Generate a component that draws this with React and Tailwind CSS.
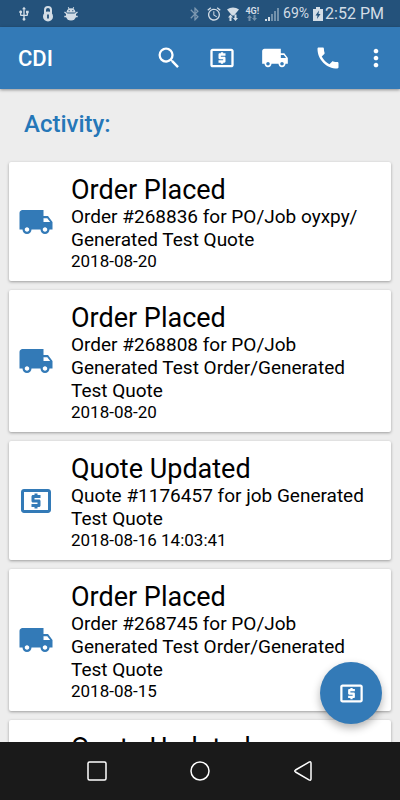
import {
  MdAlarm,
  MdBluetooth,
  MdLocalAtm,
  MdLocalShipping,
  MdMoreVert,
  MdPhone,
  MdSearch,
  MdUsb,
} from 'react-icons/md';

const activities = [
  {
    id: 1,
    type: 'order',
    title: 'Order Placed',
    description: 'Order #268836 for PO/Job oyxpy/\u200bGenerated Test Quote',
    date: '2018-08-20',
  },
  {
    id: 2,
    type: 'order',
    title: 'Order Placed',
    description: 'Order #268808 for PO/Job Generated Test Order/Generated Test Quote',
    date: '2018-08-20',
  },
  {
    id: 3,
    type: 'quote',
    title: 'Quote Updated',
    description: 'Quote #1176457 for job Generated Test Quote',
    date: '2018-08-16 14:03:41',
  },
  {
    id: 4,
    type: 'order',
    title: 'Order Placed',
    description: 'Order #268745 for PO/Job Generated Test Order/Generated Test Quote',
    date: '2018-08-15',
  },
  {
    id: 5,
    type: 'quote',
    title: 'Quote Updated',
  },
];

function LockIcon() {
  return (
    <svg width="12" height="16" viewBox="0 0 12 16" fill="none">
      <path d="M3 8V4a3 3 0 0 1 6 0v4" stroke="currentColor" strokeWidth="2" />
      <circle cx="6" cy="10.5" r="5" fill="currentColor" />
      <path d="M6 8.5v4" stroke="#24527b" strokeWidth="1.8" />
    </svg>
  );
}

function DebugIcon() {
  return (
    <svg width="14" height="16" viewBox="0 0 14 16" fill="currentColor">
      <path d="M2.5 6.5C2.5 4.8 3.3 3.6 4.5 2.9L3.8 1.5l.8-.4.9 1.5a5 5 0 0 1 3 0l.9-1.5.8.4-.7 1.4c1.2.7 2 1.9 2 3.6z" />
      <path d="M2 7.5h10V10a5 4.5 0 0 1-10 0z" />
      <path
        d="M.5 6L3 8M13.5 6L11 8M.3 10.5h13.4"
        fill="none"
        stroke="currentColor"
        strokeWidth="1.3"
      />
      <circle cx="5.2" cy="4.7" r=".6" fill="#24527b" />
      <circle cx="8.8" cy="4.7" r=".6" fill="#24527b" />
    </svg>
  );
}

function WifiIcon() {
  return (
    <svg width="12" height="16" viewBox="0 0 12 16" fill="currentColor">
      <path d="M0 3.5C3.5.8 8.5.8 12 3.5L7 9.5H5z" />
      <path d="M3.5 8.5L6 11.5H4.5V15h-2v-3.5H1zM8.5 15L6 12h1.5V8.5h2V12H11z" />
    </svg>
  );
}

function SignalIcon() {
  return (
    <svg width="15" height="14" viewBox="0 0 15 14" fill="currentColor">
      <path d="M0 12h2v2H0zM3 10h2v4H3z" />
      <path d="M6 7h2v7H6zM9 4h2v10H9zM12 1h2v13h-2z" opacity=".45" />
    </svg>
  );
}

function BatteryIcon() {
  return (
    <svg width="10" height="14" viewBox="0 0 10 14" fill="currentColor">
      <path d="M3 0h4v2h3v12H0V2h3z" />
      <path d="M6 3.5L2.5 8.5h2L4 12l3.5-5h-2z" fill="#24527b" />
    </svg>
  );
}

function StatusBar() {
  return (
    <div className="flex h-[27px] shrink-0 items-center justify-between bg-[#24527b] px-4 text-[#d3dde6]">
      <div className="flex items-center gap-[10px]">
        <MdUsb size={16} />
        <LockIcon />
        <DebugIcon />
      </div>
      <div className="flex items-center">
        <MdBluetooth size={16} className="mr-[3px] opacity-50" />
        <MdAlarm size={16} className="mr-[5px]" />
        <WifiIcon />
        <span className="mx-[6px] flex flex-col items-center text-[9px] leading-[8px] font-bold">
          4G!
          <svg width="10" height="6" viewBox="0 0 10 6" fill="currentColor" opacity=".45">
            <path d="M2.5 0L5 3H3.5v3h-2V3H0zM7.5 6L5 3h1.5V0h2v3H10z" />
          </svg>
        </span>
        <SignalIcon />
        <span className="ml-[3px] text-[14px]">69%</span>
        <span className="mr-[2px] ml-[4px]">
          <BatteryIcon />
        </span>
        <span className="text-[16px]">2:52 PM</span>
      </div>
    </div>
  );
}

function AppBar() {
  const actions = [
    { label: 'Search', Icon: MdSearch },
    { label: 'Quotes', Icon: MdLocalAtm },
    { label: 'Orders', Icon: MdLocalShipping },
    { label: 'Call', Icon: MdPhone },
  ];

  return (
    <header className="relative z-10 flex h-[62px] shrink-0 items-center bg-[#337ab7] pr-[3px] pl-[18px] text-white shadow-[0_1px_3px_rgba(0,0,0,0.4)]">
      <h1 className="flex-1 text-[22px] font-medium">CDI</h1>
      {actions.map(({ label, Icon }) => (
        <button key={label} aria-label={label} className="flex h-12 w-[53px] items-center justify-center">
          <Icon size={28} />
        </button>
      ))}
      <button aria-label="More options" className="flex h-12 w-[43px] items-center justify-center">
        <MdMoreVert size={28} />
      </button>
    </header>
  );
}

function ActivityCard({ activity }) {
  const Icon = activity.type === 'order' ? MdLocalShipping : MdLocalAtm;

  return (
    <li className="flex min-h-[119px] items-center gap-[17px] rounded-[2px] bg-white pr-3 pl-[9px] shadow-[0_1px_3px_rgba(0,0,0,0.35)]">
      <Icon size={36} className="shrink-0 text-[#337ab7]" />
      <div className="min-w-0 flex-1 self-start pt-[13px] pb-[10px] text-black">
        <h3 className="text-[27px] leading-[30px]">{activity.title}</h3>
        {activity.description && <p className="text-[19px] leading-[23px]">{activity.description}</p>}
        {activity.date && <p className="text-[17px] leading-[20px]">{activity.date}</p>}
      </div>
    </li>
  );
}

function NavigationBar() {
  return (
    <nav className="flex h-[58px] shrink-0 items-center justify-center gap-[75px] bg-[#1a1a1a] text-white">
      <button aria-label="Recent apps">
        <svg width="28" height="28" viewBox="0 0 28 28" fill="none" stroke="currentColor" strokeWidth="1.5">
          <rect x="5" y="5" width="18" height="18" rx="1.5" />
        </svg>
      </button>
      <button aria-label="Home">
        <svg width="28" height="28" viewBox="0 0 28 28" fill="none" stroke="currentColor" strokeWidth="1.5">
          <circle cx="14" cy="14" r="9" />
        </svg>
      </button>
      <button aria-label="Back">
        <svg width="28" height="28" viewBox="0 0 28 28" fill="none" stroke="currentColor" strokeWidth="1.5" strokeLinejoin="round">
          <path d="M20 5.2Q22 4.2 22 6.2v15.6q0 2-2 1L6.5 15q-1.5-1 0-2z" />
        </svg>
      </button>
    </nav>
  );
}

export default function App() {
  return (
    <div className="relative flex h-screen flex-col bg-[#ededed] font-[Roboto,sans-serif]">
      <StatusBar />
      <AppBar />
      <main className="min-h-0 flex-1 overflow-hidden px-[9px]">
        <h2 className="px-[15px] pt-[19px] pb-[22px] text-[24px] leading-[32px] font-medium text-[#2577b8]">
          Activity:
        </h2>
        <ul className="flex flex-col gap-[9px]">
          {activities.map((activity) => (
            <ActivityCard key={activity.id} activity={activity} />
          ))}
        </ul>
      </main>
      <NavigationBar />

      {/* Floating action button */}
      <button
        aria-label="New quote"
        className="absolute right-[18px] bottom-[76px] flex size-[62px] items-center justify-center rounded-full bg-[#337ab7] text-white shadow-[0_4px_8px_rgba(0,0,0,0.3)]"
      >
        <MdLocalAtm size={27} />
      </button>
    </div>
  );
}
